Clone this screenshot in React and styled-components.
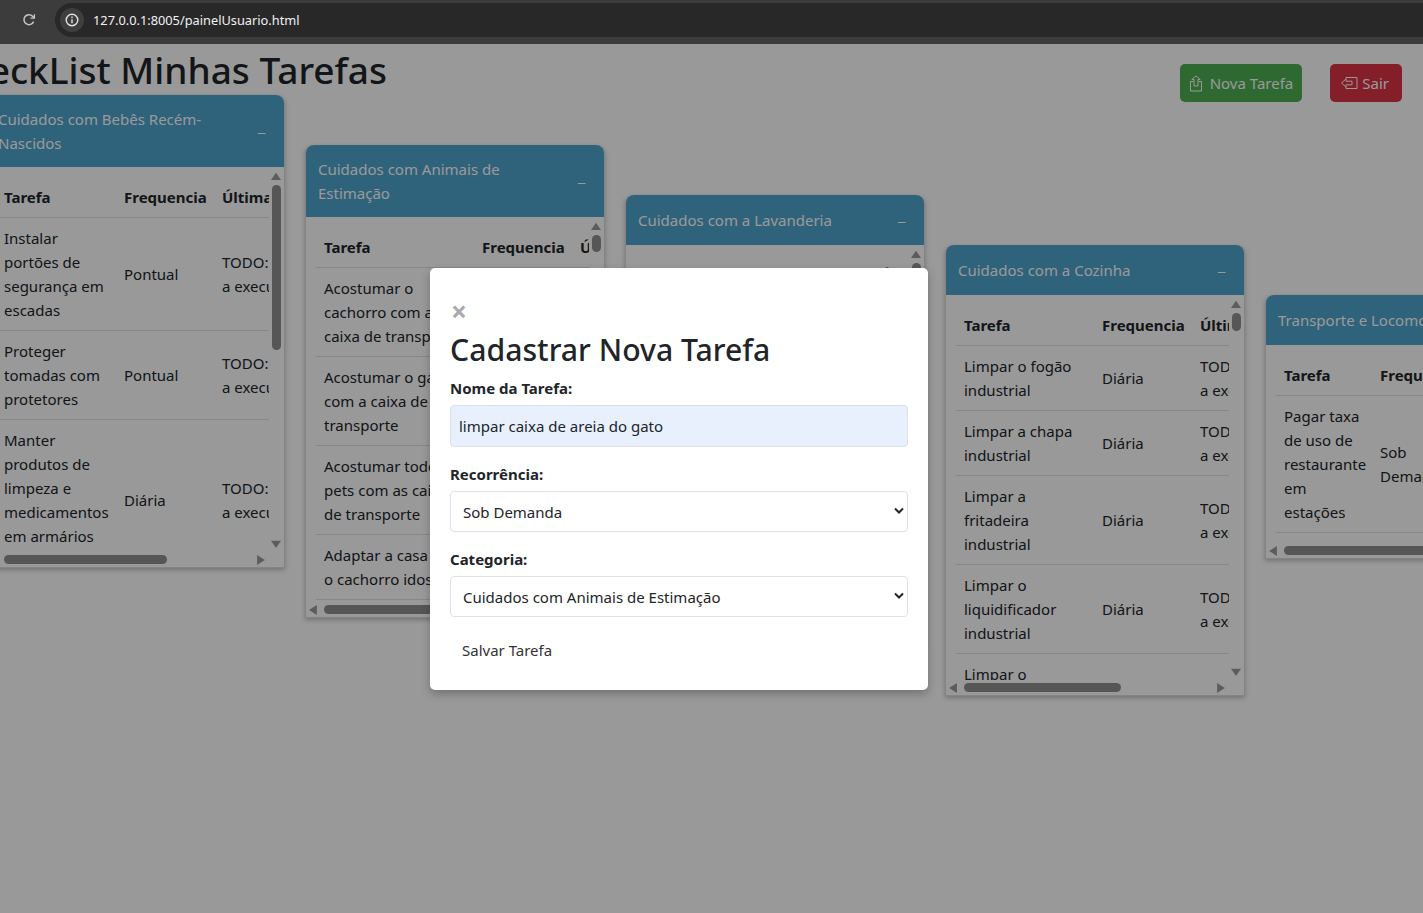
import React from "react";
import styled, { createGlobalStyle } from "styled-components";

const GlobalStyle = createGlobalStyle`
  html, body {
    margin: 0;
    padding: 0;
    height: 100%;
    overflow: hidden;
    background: #fff;
    font-family: "Noto Sans", "Open Sans", sans-serif;
    font-size: 15px;
    line-height: 24px;
    color: #212529;
  }
`;

const BrowserBar = styled.div`
  height: 44px;
  background: #3c3c3c;
  padding: 3px 0 7px 0;
  box-sizing: border-box;
  display: flex;
  align-items: stretch;
`;

const ReloadButton = styled.div`
  width: 55px;
  display: flex;
  align-items: center;
  justify-content: center;
  padding-left: 3px;
  box-sizing: border-box;
  color: #c7c7c7;
`;

const Omnibox = styled.div`
  flex: 1;
  background: #282828;
  border-radius: 17px 0 0 17px;
  display: flex;
  align-items: center;
  padding-left: 5px;
  gap: 9px;
`;

const InfoChip = styled.div`
  width: 24px;
  height: 24px;
  border-radius: 50%;
  background: #3f3f3f;
  display: flex;
  align-items: center;
  justify-content: center;
  color: #e3e3e3;
`;

const UrlText = styled.span`
  font-family: "Noto Sans", sans-serif;
  font-size: 12.8px;
  color: #f1f1f1;
`;

const Page = styled.div`
  position: relative;
  height: 869px;
  overflow: hidden;
  background: #fff;
`;

const TopRow = styled.div`
  display: flex;
  align-items: flex-start;
  justify-content: space-between;
  padding-right: 21px;
`;

const Title = styled.h1`
  margin: 0 0 0 -58px;
  font-size: 37px;
  line-height: 51px;
  font-weight: 500;
  white-space: nowrap;
`;

const Actions = styled.div`
  display: flex;
  gap: 28px;
  padding-top: 20px;
`;

const ActionButton = styled.button`
  height: 38px;
  padding: ${(p) => p.$pad};
  display: flex;
  align-items: center;
  gap: ${(p) => p.$gap}px;
  border: 0;
  border-radius: 5px;
  background: ${(p) => p.$bg};
  color: #fff;
  font: inherit;
`;

const Board = styled.div`
  display: flex;
  align-items: flex-start;
  gap: 20px;
  margin-left: -15px;
  margin-top: -7px;
`;

const Card = styled.section`
  position: relative;
  flex: 0 0 auto;
  width: 300px;
  min-width: 0;
  box-sizing: border-box;
  margin-top: ${(p) => p.$offset}px;
  background: #fff;
  border: 1px solid #ddd;
  border-top: 0;
  border-radius: 8px 8px 0 0;
  box-shadow: 0 2px 5px rgba(0, 0, 0, 0.25);
`;

const CardHeader = styled.header`
  display: flex;
  align-items: center;
  justify-content: space-between;
  min-height: 26px;
  padding: 12px 18px 12px 12px;
  background: #4fa4cd;
  border-radius: 8px 8px 0 0;
  color: #fff;
  white-space: pre;
`;

const Collapse = styled.span`
  font-size: 18px;
  font-weight: 300;
  line-height: 26px;
`;

const TableClip = styled.div`
  height: ${(p) => p.$height}px;
  margin: 0 15px 15px 0;
  padding: 10px 0 0 10px;
  box-sizing: border-box;
  overflow: hidden;
`;

const Table = styled.table`
  table-layout: fixed;
  border-collapse: collapse;
  width: ${(p) => p.$width}px;
`;

const Col = styled.col`
  width: ${(p) => p.$width}px;
`;

const HeadCell = styled.th`
  padding: 8px;
  text-align: left;
  font-weight: 700;
  white-space: nowrap;
  overflow: hidden;
  border-bottom: 1px solid #dee2e6;
`;

const Cell = styled.td`
  padding: 8px;
  white-space: pre;
  border-bottom: 1px solid #dee2e6;
`;

const VTrack = styled.div`
  position: absolute;
  top: ${(p) => p.$top}px;
  bottom: 15px;
  right: 0;
  width: 15px;
`;

const HTrack = styled.div`
  position: absolute;
  left: 0;
  right: 15px;
  bottom: 0;
  height: 15px;
`;

const Thumb = styled.div`
  position: absolute;
  background: #8f8f8f;
  border-radius: 5px;
  ${(p) =>
    p.$vertical
      ? `left: 3px; width: 9px; top: ${p.$start}px; height: ${p.$size}px;`
      : `top: 3px; height: 9px; left: ${p.$start}px; width: ${p.$size}px;`}
`;

const Arrow = styled.svg`
  position: absolute;
  width: 10px;
  height: 10px;
  fill: #9a9a9a;
  ${(p) => p.$place}
`;

const Backdrop = styled.div`
  position: absolute;
  inset: 0;
  background: rgba(0, 0, 0, 0.4);
  padding: 224px 0 0 430px;
  box-sizing: border-box;
`;

const Modal = styled.form`
  width: 498px;
  height: 422px;
  box-sizing: border-box;
  padding: 20px;
  background: #fff;
  border-radius: 5px;
  box-shadow: 0 4px 8px rgba(0, 0, 0, 0.25);
`;

const CloseMark = styled.div`
  height: 32px;
  margin-top: 7px;
  padding-left: 1px;
  font-size: 28px;
  font-weight: 700;
  line-height: 32px;
  color: #aaa;
`;

const ModalTitle = styled.h2`
  margin: 4px 0 7px;
  font-size: 30.2px;
  line-height: 38px;
  font-weight: 500;
`;

const Label = styled.label`
  display: block;
  margin-bottom: 5px;
  font-weight: 700;
`;

const TextField = styled.input`
  display: block;
  width: 100%;
  height: 42px;
  box-sizing: border-box;
  margin-bottom: 15px;
  padding: 0 8px;
  border: 1px solid #dee2e6;
  border-radius: 4px;
  background: #e8f0fe;
  color: #212529;
  font: inherit;
`;

const SelectWrap = styled.div`
  position: relative;
  margin-bottom: 15px;
`;

const Select = styled.select`
  display: block;
  width: 100%;
  height: 41px;
  box-sizing: border-box;
  padding: 0 12px;
  border: 1px solid #dee2e6;
  border-radius: 4px;
  background: #fff;
  color: #212529;
  font: inherit;
  appearance: none;
`;

const Chevron = styled.svg`
  position: absolute;
  top: 16px;
  right: 4px;
  width: 10px;
  height: 8px;
  fill: none;
  stroke: #212529;
  stroke-width: 2;
  pointer-events: none;
`;

const SaveButton = styled.button`
  display: block;
  padding: 6px 12px;
  margin-top: 6px;
  border: 0;
  background: transparent;
  color: #333;
  font: inherit;
`;

const ReloadIcon = () => (
  <svg width="14" height="14" viewBox="0 0 14 14" fill="none" stroke="currentColor" strokeWidth="1.5">
    <path d="M11.6 8.6A5 5 0 1 1 10.6 3.2L12 4.6" />
    <path d="M12.4 1.2v3.9H8.5" strokeWidth="1.3" />
  </svg>
);

const InfoIcon = () => (
  <svg width="14" height="14" viewBox="0 0 14 14" fill="none" stroke="currentColor" strokeWidth="1.4">
    <circle cx="7" cy="7" r="5.8" />
    <path d="M7 6.2v4M7 3.6v1.5" />
  </svg>
);

const ShareIcon = () => (
  <svg width="16" height="17" viewBox="0 0 16 17" fill="none" stroke="currentColor" strokeWidth="1">
    <path d="M5.5 6.5H2.5v9.5h11V6.5h-3" />
    <path d="M6 11V4.5H3.8L8 1l4.2 3.5H10V11z" />
  </svg>
);

const ExitIcon = () => (
  <svg width="18" height="14" viewBox="0 0 18 14" fill="none" stroke="currentColor" strokeWidth="1">
    <path d="M6 3V1.5h11v11H6V11" />
    <path d="M1.5 7 6 3v2.2h6v3.6H6V11z" />
  </svg>
);

const triangles = {
  up: "M4.5 1.5 9 8H0z",
  down: "M4.5 8 0 1.5h9z",
  left: "M1 4.5 8 0v9z",
  right: "M8 4.5 1 0v9z"
};

const ScrollArrow = ({ dir, place }) => (
  <Arrow viewBox="0 0 9 9" $place={place}>
    <path d={triangles[dir]} />
  </Arrow>
);

const heads = ["Tarefa", "Frequencia", "Última Execução"];
const todo = "TODO:\na executar";

const boards = [
  {
    title: "Cuidados com Bebês Recém-\nNascidos",
    offset: 0,
    clip: 385,
    cols: [120, 98, 220],
    vthumb: [18, 165],
    hthumb: [18, 163],
    rows: [
      ["Instalar\nportões de\nsegurança em\nescadas", "Pontual", todo],
      ["Proteger\ntomadas com\nprotetores", "Pontual", todo],
      ["Manter\nprodutos de\nlimpeza e\nmedicamentos\nem armários\ntrancados", "Diária", todo]
    ]
  },
  {
    title: "Cuidados com Animais de\nEstimação",
    offset: 50,
    clip: 385,
    cols: [158, 98, 220],
    vthumb: [18, 17],
    hthumb: [18, 163],
    rows: [
      ["Acostumar o\ncachorro com a\ncaixa de transporte", "Pontual", todo],
      ["Acostumar o gato\ncom a caixa de\ntransporte", "Pontual", todo],
      ["Acostumar todos os\npets com as caixas\nde transporte", "Pontual", todo],
      ["Adaptar a casa para\no cachorro idoso", "Pontual", todo]
    ]
  },
  {
    title: "Cuidados com a Lavanderia",
    offset: 100,
    clip: 385,
    cols: [138, 98, 211],
    vthumb: [18, 17],
    hthumb: [18, 163],
    rows: [["Lavar as roupas\nde cama", "Semanal", todo]]
  },
  {
    title: "Cuidados com a Cozinha",
    offset: 150,
    clip: 385,
    cols: [138, 98, 211],
    vthumb: [18, 18],
    hthumb: [18, 157],
    rows: [
      ["Limpar o fogão\nindustrial", "Diária", todo],
      ["Limpar a chapa\nindustrial", "Diária", todo],
      ["Limpar a\nfritadeira\nindustrial", "Diária", todo],
      ["Limpar o\nliquidificador\nindustrial", "Diária", todo],
      ["Limpar o\nmicro-ondas\nindustrial", "Diária", todo]
    ]
  },
  {
    title: "Transporte e Locomoção",
    offset: 200,
    clip: 198,
    cols: [96, 98, 220],
    vthumb: null,
    hthumb: [18, 200],
    rows: [["Pagar taxa\nde uso de\nrestaurante\nem\nestações", "Sob\nDemanda", todo]]
  }
];

const TaskCard = ({ board }) => {
  const headerHeight = board.title.includes("\n") ? 72 : 50;
  return (
    <Card $offset={board.offset}>
      <CardHeader>
        <span>{board.title}</span>
        <Collapse>–</Collapse>
      </CardHeader>
      <TableClip $height={board.clip}>
        <Table $width={board.cols.reduce((a, b) => a + b, 0)}>
          <colgroup>
            {board.cols.map((c, i) => (
              <Col key={i} $width={c} />
            ))}
          </colgroup>
          <thead>
            <tr>
              {heads.map((h) => (
                <HeadCell key={h}>{h}</HeadCell>
              ))}
            </tr>
          </thead>
          <tbody>
            {board.rows.map((row, i) => (
              <tr key={i}>
                {row.map((text, j) => (
                  <Cell key={j}>{text}</Cell>
                ))}
              </tr>
            ))}
          </tbody>
        </Table>
      </TableClip>
      {board.vthumb && (
        <VTrack $top={headerHeight}>
          <ScrollArrow dir="up" place="top: 4px; left: 2px;" />
          <Thumb $vertical $start={board.vthumb[0]} $size={board.vthumb[1]} />
          <ScrollArrow dir="down" place="bottom: 3px; left: 2px;" />
        </VTrack>
      )}
      <HTrack>
        <ScrollArrow dir="left" place="top: 3px; left: 2px;" />
        <Thumb $start={board.hthumb[0]} $size={board.hthumb[1]} />
        <ScrollArrow dir="right" place="top: 3px; right: 3px;" />
      </HTrack>
    </Card>
  );
};

export default function App() {
  return (
    <>
      <GlobalStyle />
      <BrowserBar>
        <ReloadButton>
          <ReloadIcon />
        </ReloadButton>
        <Omnibox>
          <InfoChip>
            <InfoIcon />
          </InfoChip>
          <UrlText>127.0.0.1:8005/painelUsuario.html</UrlText>
        </Omnibox>
      </BrowserBar>
      <Page>
        <TopRow>
          <Title>CheckList Minhas Tarefas</Title>
          <Actions>
            <ActionButton type="button" $bg="#4caf50" $pad="0 9px 0 8px" $gap={6}>
              <ShareIcon /> Nova Tarefa
            </ActionButton>
            <ActionButton type="button" $bg="#dc3545" $pad="0 13px 0 10px" $gap={4}>
              <ExitIcon /> Sair
            </ActionButton>
          </Actions>
        </TopRow>
        <Board>
          {boards.map((b) => (
            <TaskCard key={b.title} board={b} />
          ))}
        </Board>
        <Backdrop>
          <Modal>
            <CloseMark>×</CloseMark>
            <ModalTitle>Cadastrar Nova Tarefa</ModalTitle>
            <Label>Nome da Tarefa:</Label>
            <TextField defaultValue="limpar caixa de areia do gato" />
            <Label>Recorrência:</Label>
            <SelectWrap>
              <Select defaultValue="Sob Demanda">
                <option>Sob Demanda</option>
              </Select>
              <Chevron viewBox="0 0 10 8">
                <path d="M1 1.5 5 5.5l4-4" />
              </Chevron>
            </SelectWrap>
            <Label>Categoria:</Label>
            <SelectWrap>
              <Select defaultValue="Cuidados com Animais de Estimação">
                <option>Cuidados com Animais de Estimação</option>
              </Select>
              <Chevron viewBox="0 0 10 8">
                <path d="M1 1.5 5 5.5l4-4" />
              </Chevron>
            </SelectWrap>
            <SaveButton type="button">Salvar Tarefa</SaveButton>
          </Modal>
        </Backdrop>
      </Page>
    </>
  );
}
